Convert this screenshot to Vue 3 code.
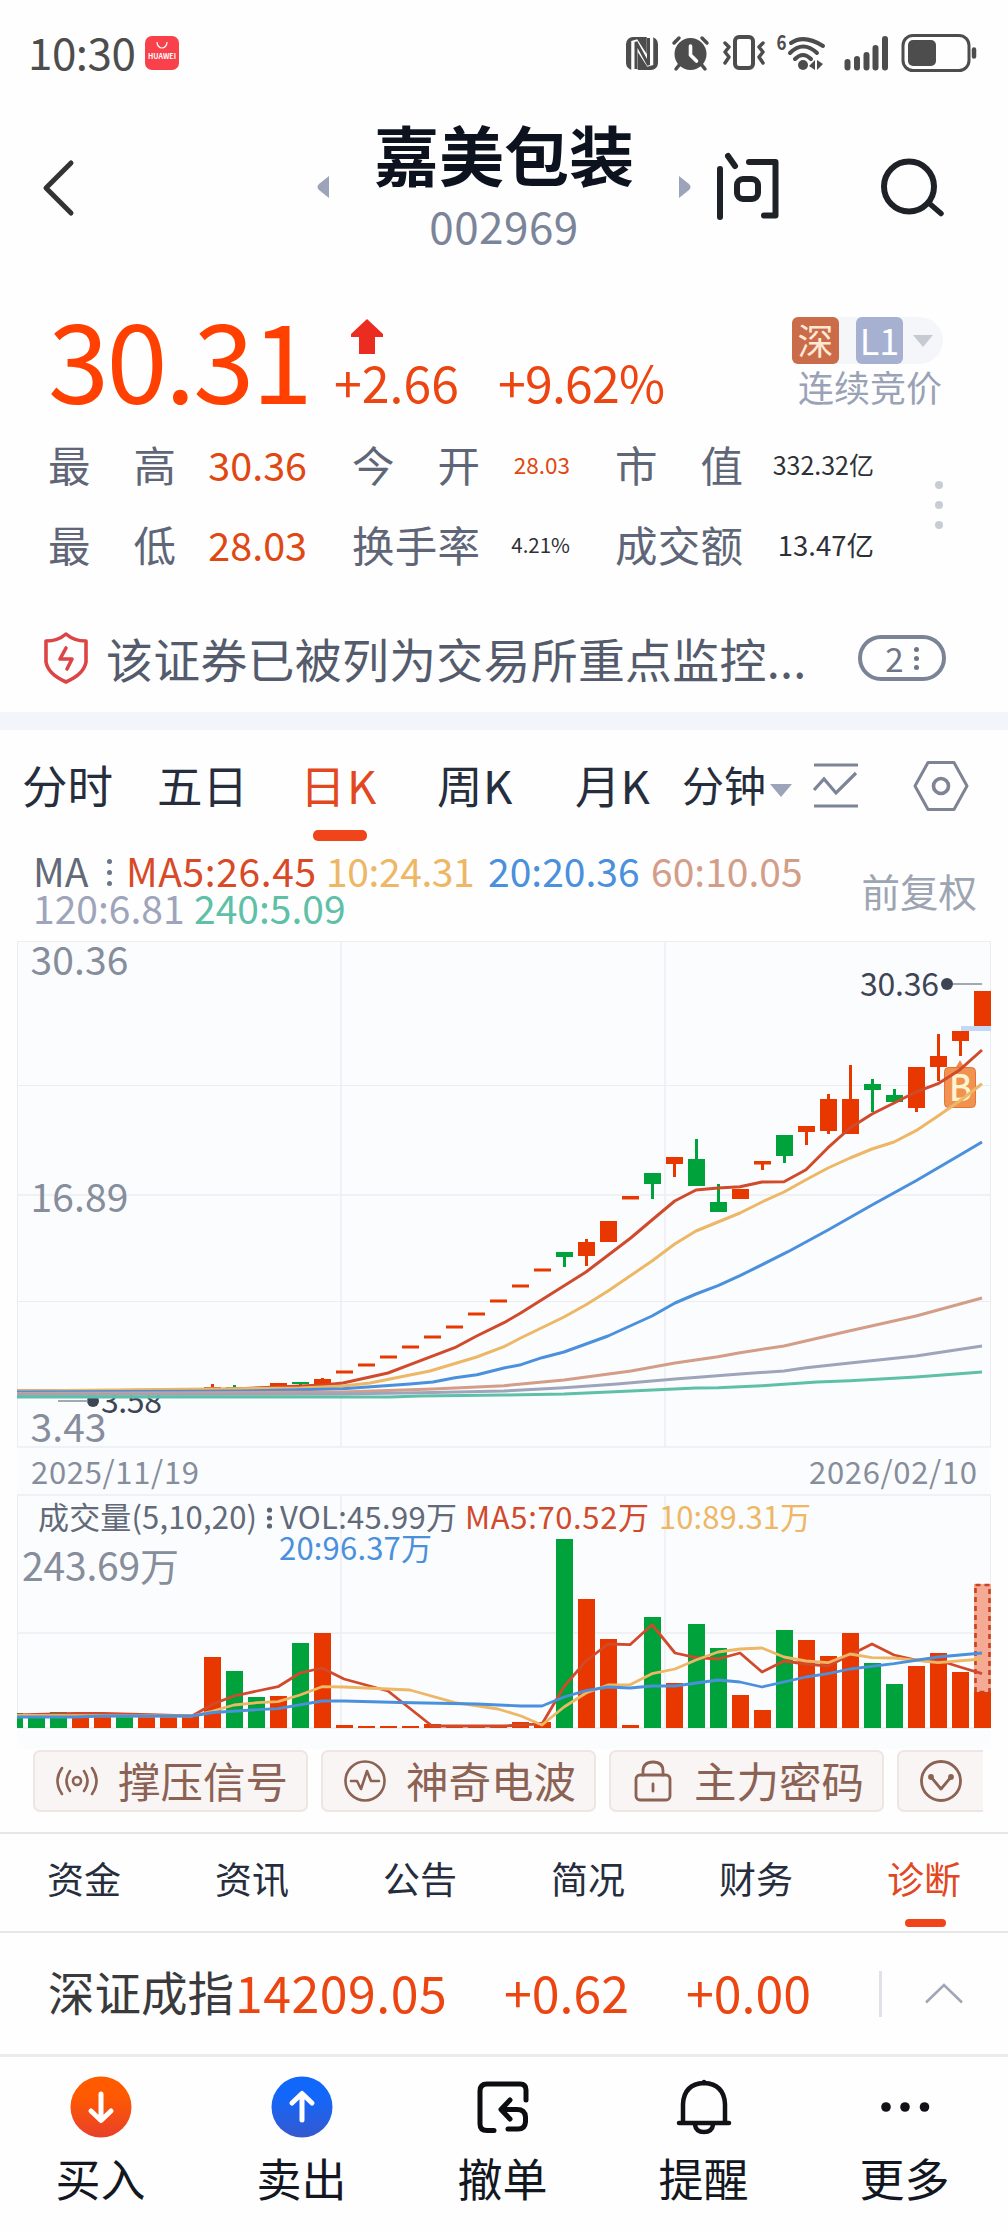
<!--
  Stock detail page: quote, daily K chart, volume, bottom actions
-->

<template>
  <div class="stock-page">
    <!-- Status bar -->
    <div class="status-bar">
      <span class="status-bar__time">10:30</span>
      <span class="status-bar__app">
        <svg width="14" height="9" viewBox="0 0 14 9"><path d="M2 1a5 6 0 0 0 10 0" fill="none" stroke="#fff" stroke-width="1.2" /></svg>
        <span class="status-bar__brand">HUAWEI</span>
      </span>
      <svg class="status-bar__icons" width="360" height="44" viewBox="620 31 360 44" fill="none" stroke="#4d4d4d" stroke-linecap="round">
        <rect x="626" y="37" width="32" height="33" rx="7" fill="#4d4d4d" stroke="none" />
        <path d="M634.500 70V41L650 65V36" stroke="#fff" stroke-width="6.500" stroke-linecap="butt" stroke-linejoin="bevel" />
        <path d="M636 69V42L648.500 65V38" stroke="#4d4d4d" stroke-width="3" stroke-linecap="butt" stroke-linejoin="bevel" />
        <circle cx="690.500" cy="54" r="16" fill="#4d4d4d" stroke="none" />
        <path d="M674 43l5-5M702 38l5 5M680 64l-4 5M701 64l4 5" stroke-width="3.500" />
        <path d="M690.500 46v9l6 6" stroke="#fff" stroke-width="3.600" />
        <rect x="735" y="37" width="18" height="31" rx="4" stroke-width="4" />
        <path d="M725 43l4 4-4 5 4 5-4 6M763 43l-4 4 4 5-4 5 4 6" stroke-width="3.500" stroke-linejoin="round" />
        <path d="M791 43q13-9 32 3M790 53q13-13 27 0M795 59q8-8 16 0" stroke-width="4" />
        <circle cx="803" cy="65" r="5" fill="#4d4d4d" stroke="none" />
        <path d="M809 66l6-6v10M817 60v10l6-6z" fill="#4d4d4d" stroke="none" />
        <text x="776.500" y="50" font-size="21" font-weight="700" fill="#4d4d4d" stroke="none" textLength="10" lengthAdjust="spacingAndGlyphs">6</text>
        <path d="M847.500 62v5.500M857 59v8.500M866.500 55v12.500M875.500 48v19.500M885 39v28.500" stroke-width="6" />
        <rect x="903" y="35.500" width="66" height="35" rx="10" stroke-width="3" />
        <rect x="908" y="40" width="28" height="26" rx="5" fill="#4d4d4d" stroke="none" />
        <path d="M974 49.500v7" stroke-width="4.500" />
      </svg>
    </div>

    <!-- Header -->
    <header class="nav">
      <svg class="nav__back" width="34" height="60" viewBox="0 0 34 60" fill="none" stroke="#333" stroke-width="5" stroke-linecap="round" stroke-linejoin="round">
        <path d="M30 5L5 30L30 55" />
      </svg>
      <svg class="nav__prev" width="12" height="22" viewBox="0 0 12 22"><path d="M12 0L2 8Q-1 11 2 14L12 22z" fill="#9ba4b8" /></svg>
      <div class="nav__title">
        <h1 class="nav__name">嘉美包装</h1>
        <span class="nav__code">002969</span>
      </div>
      <svg class="nav__next" width="12" height="22" viewBox="0 0 12 22"><path d="M0 0L10 8Q13 11 10 14L0 22z" fill="#9ba4b8" /></svg>
      <svg class="nav__ask" width="64" height="68" viewBox="716 153 64 68" fill="none" stroke="#1e2227" stroke-width="6" stroke-linecap="round" stroke-linejoin="round">
        <path d="M720 169V217M728 156L735 166M749 162H775.500V215.500H764" />
        <rect x="737" y="179" width="21" height="20" rx="6" />
      </svg>
      <svg class="nav__search" width="66" height="62" viewBox="880 157 66 62" fill="none" stroke="#1e2227" stroke-width="6" stroke-linecap="round">
        <circle cx="909" cy="186.500" r="25" />
        <path d="M930 204L941 213.500" stroke-width="5.500" />
      </svg>
    </header>

    <!-- Quote -->
    <section class="quote">
      <div class="quote__top">
        <span class="quote__price">30.31</span>
        <div class="quote__change">
          <svg class="quote__arrow" width="32" height="36" viewBox="0 0 32 36"><path d="M16 0L32 15V18H24V35H8V18H0V15z" fill="#eb2c20" /></svg>
          <div class="quote__diff">
            <span class="quote__delta">+2.66</span>
            <span class="quote__percent">+9.62%</span>
          </div>
        </div>
        <div class="quote__market">
          <div class="quote__badges">
            <span class="badge badge--sz">深</span>
            <span class="badge badge--level">L1</span>
            <svg width="20" height="12" viewBox="0 0 20 12"><path d="M0 0H20L10 12z" fill="#c6cad3" /></svg>
          </div>
          <span class="quote__phase">连续竞价</span>
        </div>
      </div>
      <div class="quote__body">
        <div class="quote__grid">
          <template v-for="item in stats" :key="item.label">
            <span class="quote__label"><i v-for="c in item.label" :key="c">{{ c }}</i></span>
            <span class="quote__value" :class="item.cls">{{ item.value }}</span>
          </template>
        </div>
        <div class="quote__more"><i></i><i></i><i></i></div>
      </div>
    </section>

    <!-- Notice -->
    <section class="notice">
      <svg width="46" height="54" viewBox="0 0 46 54" fill="none" stroke="#dc4545" stroke-width="3.600" stroke-linejoin="round" stroke-linecap="round">
        <path d="M23 3Q31 10 43 10V31Q41 43 23 51Q5 43 3 31V10Q15 10 23 3z" />
        <path d="M23 17L17 28H29L24 38" />
      </svg>
      <span class="notice__text">该证券已被列为交易所重点监控...</span>
      <span class="notice__count">2<span class="dots"><i></i><i></i><i></i></span></span>
    </section>

    <!-- Period tabs -->
    <nav class="period">
      <span v-for="tab in periods" :key="tab.name" class="period__item" :class="[tab.cls, { 'period__item--active': tab.active }]">{{ tab.name }}</span>
      <svg class="period__caret" width="22" height="13" viewBox="0 0 22 13"><path d="M0 0H22L11 13z" fill="#9ba4b8" /></svg>
      <svg class="period__line" width="46" height="46" viewBox="0 0 46 46" fill="none" stroke="#7c8496" stroke-width="3.200">
        <path d="M1 2H45M1 43H45M1 27L11 16L23 30L43 10" />
      </svg>
      <svg class="period__set" width="58" height="52" viewBox="0 0 58 52" fill="none" stroke="#7f8494" stroke-width="3">
        <path d="M16 2.500H42L55 26L42 49.500H16L3 26z" stroke-linejoin="round" />
        <circle cx="29" cy="26" r="7.500" stroke-width="3.600" />
      </svg>
    </nav>

    <!-- MA legend -->
    <section class="ma">
      <div class="ma__values">
        <div class="ma__row">
          <span class="ma__name">MA</span>
          <span class="dots dots--ma"><i></i><i></i><i></i></span>
          <span class="ma__item ma__item--5">MA5:26.45</span>
          <span class="ma__item ma__item--10">10:24.31</span>
          <span class="ma__item ma__item--20">20:20.36</span>
          <span class="ma__item ma__item--60">60:10.05</span>
        </div>
        <div class="ma__row">
          <span class="ma__item ma__item--120">120:6.81</span>
          <span class="ma__item ma__item--240">240:5.09</span>
        </div>
      </div>
      <span class="ma__adjust">前复权</span>
    </section>

    <!-- K line and volume -->
    <svg class="chart" width="1008" height="809" viewBox="0 940 1008 809">
      <rect x="17" y="941" width="974" height="808" fill="#fbfcfe" />
      <g fill="none" stroke="#ebedf1" stroke-width="1.500">
        <path d="M17.500 1447V941.500H990.500V1447M17.500 1495V1728M990.500 1495V1728M17 1085.500H991M17 1301.500H991" stroke-width="1" />
        <path d="M17 1195H991M17 1447H991M17 1495H991M17 1633H991M17 1728H991M341 941V1447M665 941V1447M341 1495V1728M665 1495V1728" />
      </g>

      <g fill="#868d9b" font-size="39">
        <text x="30.500" y="975" textLength="98">30.36</text>
        <text x="30.500" y="1212" textLength="98">16.89</text>
        <text x="30.500" y="1442" textLength="76">3.43</text>
        <text x="22" y="1581" textLength="157">243.69万</text>
      </g>
      <g fill="#868d9b" font-size="31">
        <text x="31" y="1484" textLength="168">2025/11/19</text>
        <text x="809" y="1484" textLength="168">2026/02/10</text>
      </g>

      <g fill="#3d4554" font-size="32">
        <text x="860" y="996" textLength="79">30.36</text>
        <circle cx="947" cy="984" r="6" />
        <path d="M953 984H982" stroke="#8f949e" stroke-width="1.600" />
        <text x="101" y="1413" textLength="61">3.58</text>
        <circle cx="93" cy="1401" r="6" />
        <path d="M58 1401H88" stroke="#8f949e" stroke-width="1.600" />
      </g>

      <rect x="961" y="1026" width="30" height="5" fill="#c4d8f5" />
      <g v-for="c in candles" :key="'k' + c[0]" :fill="color(c[1])">
        <rect :x="cx(c[0]) - 8.5" :y="c[2]" width="17" :height="c[3] - c[2]" />
        <rect v-if="c[4]" :x="cx(c[0]) - 1.5" :y="c[4]" width="3" :height="c[5] - c[4]" />
      </g>

      <path d="M956 1067L960 1060L964 1067z" fill="#f08a4b" />
      <rect x="944.500" y="1067.500" width="31" height="40" rx="4" fill="#f09350" stroke="#e8703a" />
      <text x="949" y="1101" font-size="37" font-weight="500" fill="#fff3d0" textLength="23" lengthAdjust="spacingAndGlyphs">B</text>

      <g fill="none" stroke-width="3" stroke-linejoin="round">
        <polyline v-for="l in priceLines" :key="l.color" :points="l.points" :stroke="l.color" />
      </g>

      <rect v-for="v in volumes" :key="'v' + v[0]" :x="Math.max(cx(v[0]) - 8.5, 17)" :y="v[2]" :width="v[0] ? 17 : 6" :height="1728 - v[2]" :fill="color(v[1])" />
      <rect x="974" y="1584" width="17" height="108" fill="#f5aa95" />
      <rect x="975.500" y="1585" width="14" height="107" fill="none" stroke="#c9431c" stroke-width="2.600" stroke-dasharray="5 4" />
      <g fill="none" stroke-width="2.800" stroke-linejoin="round">
        <polyline v-for="l in volumeLines" :key="l.color" :points="l.points" :stroke="l.color" />
      </g>

      <g font-size="31">
        <text x="38" y="1529" fill="#626978" textLength="219">成交量(5,10,20)</text>
        <g fill="#5d6474"><circle cx="269.500" cy="1510" r="2.600" /><circle cx="269.500" cy="1518" r="2.600" /><circle cx="269.500" cy="1526" r="2.600" /></g>
        <text x="280" y="1529" fill="#626978" textLength="177">VOL:45.99万</text>
        <text x="465" y="1529" fill="#d04a2b" textLength="184">MA5:70.52万</text>
        <text x="659" y="1529" fill="#edb766" textLength="152">10:89.31万</text>
        <text x="279" y="1560" fill="#4a90dc" textLength="153">20:96.37万</text>
      </g>
    </svg>

    <!-- Signal buttons -->
    <section class="signals">
      <div class="signal">
        <svg width="44" height="40" viewBox="0 0 44 40" fill="none" stroke="#8b6253" stroke-width="2.600" stroke-linecap="round">
          <circle cx="22" cy="20" r="4" />
          <path d="M15 10Q8 20 15 30M29 10Q36 20 29 30M7 7Q-2 20 7 33M37 7Q46 20 37 33" />
        </svg>
        <span>撑压信号</span>
      </div>
      <div class="signal">
        <svg width="44" height="44" viewBox="0 0 44 44" fill="none" stroke="#8b6253" stroke-width="2.600" stroke-linecap="round" stroke-linejoin="round">
          <circle cx="22" cy="22" r="19.500" />
          <path d="M8 22H14L18 30L24 12L28 22H36" />
        </svg>
        <span>神奇电波</span>
      </div>
      <div class="signal">
        <svg width="44" height="44" viewBox="0 0 44 44" fill="none" stroke="#8b6253" stroke-width="2.800" stroke-linecap="round">
          <rect x="5" y="16" width="34" height="25" rx="4" />
          <path d="M12 16V12Q12 3 22 3Q32 3 32 12V16M22 25V32" />
        </svg>
        <span>主力密码</span>
      </div>
      <div class="signal signal--cut">
        <svg width="44" height="44" viewBox="0 0 44 44" fill="none" stroke="#8b6253" stroke-width="2.800" stroke-linecap="round" stroke-linejoin="round">
          <circle cx="22" cy="22" r="19.500" />
          <path d="M12 18L22 30L32 18" />
          <circle cx="12" cy="18" r="1.500" fill="#8b6253" /><circle cx="32" cy="18" r="1.500" fill="#8b6253" />
        </svg>
      </div>
    </section>

    <!-- Info tabs -->
    <nav class="info">
      <span v-for="name in infoTabs" :key="name" class="info__item" :class="{ 'info__item--active': name === '诊断' }">{{ name }}</span>
    </nav>

    <!-- Index -->
    <section class="index">
      <span class="index__name">深证成指</span>
      <span class="index__num index__num--point">14209.05</span>
      <span class="index__num index__num--diff">+0.62</span>
      <span class="index__num">+0.00</span>
      <span class="index__split"></span>
      <svg width="38" height="21" viewBox="0 0 38 21" fill="none" stroke="#a0a6b4" stroke-width="2.600"><path d="M1 19.500L19 2L37 19.500" /></svg>
    </section>

    <!-- Bottom actions -->
    <footer class="actions">
      <div class="action">
        <svg width="62" height="62" viewBox="0 0 62 62">
          <defs><linearGradient id="buy" x1="0" y1="0" x2="0" y2="1"><stop offset="0.3" stop-color="#ff5a00" /><stop offset="1" stop-color="#e8402a" /></linearGradient></defs>
          <circle cx="31" cy="31" r="30.500" fill="url(#buy)" />
          <path d="M31 18V44M21 35L31 44.500L41 35" fill="none" stroke="#fff" stroke-width="5" stroke-linecap="round" stroke-linejoin="round" />
        </svg>
        <span>买入</span>
      </div>
      <div class="action">
        <svg width="62" height="62" viewBox="0 0 62 62">
          <defs><linearGradient id="sell" x1="0" y1="0" x2="0" y2="1"><stop offset="0.3" stop-color="#1267fb" /><stop offset="1" stop-color="#3559cf" /></linearGradient></defs>
          <circle cx="31" cy="31" r="30.500" fill="url(#sell)" />
          <path d="M31 44V18M21 27L31 17.500L41 27" fill="none" stroke="#fff" stroke-width="5" stroke-linecap="round" stroke-linejoin="round" />
        </svg>
        <span>卖出</span>
      </div>
      <div class="action">
        <svg width="62" height="62" viewBox="0 0 62 62" fill="none" stroke="#0c0d10" stroke-width="5" stroke-linecap="round" stroke-linejoin="round">
          <path d="M54 24V14Q54 8 48 8H15Q8 8 8 15V48Q8 54.500 15 54.500H22" />
          <path d="M38 24L29 33.500L38 43M30 33.500H45Q53 33.500 53.500 41V46Q53 53 46 53H36" />
        </svg>
        <span>撤单</span>
      </div>
      <div class="action">
        <svg width="62" height="62" viewBox="0 0 62 62" fill="none" stroke="#101218" stroke-width="4.500" stroke-linecap="round" stroke-linejoin="round">
          <path d="M6 47H56M10 47V28Q11 8 31 7Q51 8 52 28V47M31 6V7M22 49Q23 56 31 56Q39 56 40 49" />
        </svg>
        <span>提醒</span>
      </div>
      <div class="action">
        <svg width="62" height="62" viewBox="0 0 62 62" fill="#101218"><circle cx="12" cy="31" r="4.800" /><circle cx="31" cy="31" r="4.800" /><circle cx="50.500" cy="31" r="4.800" /></svg>
        <span>更多</span>
      </div>
    </footer>
  </div>
</template>

<script setup>
const stats = [
  { label: '最高', value: '30.36', cls: 'quote__value--up' },
  { label: '今开', value: '28.03', cls: 'quote__value--up quote__value--s' },
  { label: '市值', value: '332.32亿', cls: 'quote__value--m' },
  { label: '最低', value: '28.03', cls: 'quote__value--up' },
  { label: '换手率', value: '4.21%', cls: 'quote__value--xs' },
  { label: '成交额', value: '13.47亿', cls: 'quote__value--l' }
]

const periods = [
  { name: '分时', cls: 'period__item--first' },
  { name: '五日', cls: 'period__item--five' },
  { name: '日K', cls: 'period__item--day', active: true },
  { name: '周K', cls: 'period__item--week' },
  { name: '月K', cls: 'period__item--month' },
  { name: '分钟', cls: 'period__item--minute' }
]

const infoTabs = ['资金', '资讯', '公告', '简况', '财务', '诊断']

// x of the n-th trading day
const cx = (n) => 14.5 + 22 * n
const color = (type) => (type === 'r' ? '#e83800' : '#00a33b')

// [day, type, top, bottom, high, low]
const candles = [
  [8, 'r', 1388, 1390], [9, 'r', 1387, 1390, 1384, 1390], [10, 'g', 1387, 1388.5, 1385, 1388],
  [11, 'g', 1388, 1389, 1387, 1389], [12, 'r', 1383, 1388], [13, 'g', 1382, 1384, 1382, 1385.5],
  [14, 'r', 1379, 1384.5, 1378, 1384],
  ...[1372, 1365, 1357, 1347, 1337, 1327, 1314, 1301, 1286, 1270].map((y, i) => [15 + i, 'r', y - 1.5, y + 1.5]),
  [25, 'g', 1252, 1257, 1252, 1267], [26, 'r', 1242, 1256, 1239, 1266], [27, 'r', 1221, 1242],
  [28, 'r', 1196, 1199.5], [29, 'g', 1173, 1184, 1173, 1199], [30, 'r', 1157, 1164, 1157, 1177],
  [31, 'g', 1159, 1186, 1139, 1186], [32, 'g', 1202, 1212, 1184, 1212], [33, 'r', 1189, 1199],
  [34, 'r', 1161, 1164.5, 1161, 1170], [35, 'g', 1135, 1156, 1135, 1163], [36, 'r', 1126, 1132, 1126, 1145],
  [37, 'r', 1099, 1131, 1094, 1134], [38, 'r', 1099, 1134, 1065, 1134], [39, 'g', 1084, 1090, 1079, 1112],
  [40, 'g', 1095, 1102, 1089, 1102], [41, 'r', 1067, 1108, 1067, 1112], [42, 'r', 1056, 1067, 1034, 1081],
  [43, 'r', 1031, 1041, 1031, 1056], [44, 'r', 991, 1026]
]

const priceLines = [
  { color: '#d04a2b', points: '17,1391 212,1390 278,1387 323,1385 343,1383 388,1373 410,1364.7 454.7,1347.7 476.7,1336 504,1322.7 520.7,1313 586,1272 630.7,1238 652,1220 674.7,1201 696,1190 718,1188 740,1186.7 762,1182 784,1181.7 806,1169.7 828,1147.7 850,1128 872,1114 894,1103 916,1092 938,1083.7 960,1069.7 982,1050' },
  { color: '#edb766', points: '17,1391 300,1388 343,1386 370,1383 430,1371 476.7,1357 504,1346.7 520.7,1338 564,1317 586,1304.7 608,1291 652,1261 674.7,1244 696,1231 740,1213 762,1202 784,1192 806,1179.7 828,1168 850,1158 872,1149 894,1142 916,1130.7 938,1116 960,1100.7 982,1083.7' },
  { color: '#4a90dc', points: '17,1392 240,1391 343,1388.7 410,1384 433,1382 455,1377.7 477,1374.7 504,1368 521,1364.7 542,1357.7 564,1352 586,1344 608,1336 652,1316 675,1303 696,1294 718,1285.7 740,1275.7 788,1251.7 828,1230 872,1205 916,1180.7 960,1155 982,1142' },
  { color: '#d39d88', points: '17,1393.5 343,1392 433,1389 504,1385.7 564,1380 631,1371 675,1363 718,1356.7 740,1352.7 784,1346 850,1330.7 916,1316 982,1298' },
  { color: '#9ea5ba', points: '17,1394.5 343,1394 433,1392.5 504,1391 564,1387.7 617,1384 675,1379 740,1374 784,1371 806,1367.7 850,1363 916,1356 982,1346' },
  { color: '#5fc0a8', points: '17,1397 390,1397 420,1396 504,1395 564,1394 631,1391 696,1388 718,1387.7 762,1385.7 817,1382 850,1380.7 916,1377 982,1372' }
]

// [day, type, top]
const volumes = [
  [0, 'g', 1713], [1, 'g', 1717], [2, 'g', 1712], [3, 'r', 1716], [4, 'r', 1716], [5, 'g', 1717],
  [6, 'r', 1716], [7, 'r', 1716], [8, 'r', 1716], [9, 'r', 1657], [10, 'g', 1671], [11, 'g', 1697],
  [12, 'r', 1696], [13, 'g', 1643], [14, 'r', 1633], [15, 'r', 1725], [16, 'r', 1726], [17, 'r', 1726],
  [18, 'r', 1726], [19, 'r', 1724], [20, 'r', 1726], [21, 'r', 1726], [22, 'r', 1725], [23, 'r', 1722],
  [24, 'r', 1722], [25, 'g', 1539], [26, 'r', 1599], [27, 'r', 1639], [28, 'r', 1725], [29, 'g', 1617],
  [30, 'r', 1683], [31, 'g', 1624], [32, 'g', 1648], [33, 'r', 1695], [34, 'r', 1710], [35, 'g', 1630],
  [36, 'r', 1640], [37, 'r', 1656], [38, 'r', 1633], [39, 'g', 1663], [40, 'g', 1684], [41, 'r', 1666],
  [42, 'r', 1653], [43, 'r', 1672], [44, 'r', 1692]
]

const volumeLines = [
  { color: '#d04a2b', points: '17,1715 75,1713.5 103,1713.5 150,1714.7 192,1716 213,1704 234,1696 257,1691 278,1686.7 300,1673 322,1668 344,1679 388,1691 432,1726 504,1726 524,1724.7 542,1724 564,1686.7 586,1661 608,1644 630,1644.7 652,1624.7 675,1653 696,1657.7 718,1659 740,1653 762,1672 784,1661 806,1664 828,1666 850,1655 872,1644 894,1655 916,1660 944,1662 960,1667 982,1673.7' },
  { color: '#edb766', points: '17,1715.5 192,1716 213,1711 234,1705 257,1702.7 278,1701.7 300,1695 322,1686.7 344,1687 410,1690 455,1702.7 498,1709 521,1716 542,1725 564,1707 586,1693 608,1685 630,1684.7 652,1673.7 675,1669 696,1660 718,1652 740,1649 762,1648 784,1657 806,1661 828,1662.7 850,1654 872,1657.7 894,1658 938,1662.7 982,1659' },
  { color: '#4a90dc', points: '17,1717 75,1717 103,1716 192,1716 213,1712.5 257,1709.7 278,1708.7 322,1701 344,1701 400,1702.5 477,1704 521,1706 542,1706 564,1697 586,1690.7 608,1687 630,1688 652,1686 675,1686 718,1680 740,1682 762,1687 806,1677 828,1673.7 850,1669 894,1663.7 938,1657 982,1653' }
]
</script>

<style>
body {
  background: #fefefe;
}
</style>

<style scoped>
.stock-page {
  width: 1008px;
  height: 2232px;
  overflow: hidden;
  background: #fefefe;
  font-family: 'Noto Sans CJK SC', 'Noto Sans', sans-serif;
  font-weight: 400;
  color: #262d3d;
  white-space: nowrap;
}

.stock-page svg {
  display: block;
  flex: none;
  overflow: visible;
}

i {
  font-style: normal;
}

/* Status bar */
.status-bar {
  display: flex;
  align-items: center;
  height: 106px;
  box-sizing: border-box;
  padding: 0 28px;
}

.status-bar__time {
  width: 117px;
  padding-bottom: 4px;
  font-size: 44px;
  line-height: 50px;
  letter-spacing: -0.5px;
  color: #4d4d4d;
}

.status-bar__app {
  display: flex;
  flex-direction: column;
  align-items: center;
  width: 34px;
  height: 34px;
  padding-top: 5px;
  box-sizing: border-box;
  border-radius: 7px;
  background: #f8414b;
}

.status-bar__brand {
  margin-top: 2px;
  font-size: 7px;
  line-height: 8px;
  font-weight: 700;
  color: #fff;
}

.status-bar__icons {
  margin-left: auto;
}

/* Header */
.nav {
  display: flex;
  height: 194px;
}

.nav__back {
  margin: 52px 0 0 41px;
}

.nav__prev {
  margin: 70px 0 0 242px;
}

.nav__title {
  display: flex;
  flex-direction: column;
  align-items: center;
  width: 350px;
}

.nav__name {
  margin: 10px 0 0;
  font-size: 65px;
  line-height: 74px;
  font-weight: 700;
  color: #0d121f;
}

.nav__code {
  margin-top: 10px;
  font-size: 44px;
  line-height: 50px;
  letter-spacing: 0.5px;
  color: #7b8498;
}

.nav__next {
  margin-top: 70px;
}

.nav__ask {
  margin: 47px 0 0 25px;
}

.nav__search {
  margin: 51px 0 0 100px;
}

/* Quote */
.quote {
  height: 300px;
}

.quote__top {
  display: flex;
  height: 124px;
}

.quote__price {
  width: 286px;
  padding-left: 48px;
  font-size: 110px;
  line-height: 112px;
  letter-spacing: -2.5px;
  color: #ff4000;
}

.quote__change {
  width: 458px;
  padding-top: 19px;
}

.quote__arrow {
  margin-left: 17px;
}

.quote__diff {
  display: flex;
  font-size: 50px;
  line-height: 52px;
  color: #ec4511;
}

.quote__delta {
  width: 164px;
}

.quote__percent {
  letter-spacing: -0.8px;
}

.quote__market {
  padding-top: 17px;
}

.quote__badges {
  display: flex;
  align-items: center;
  width: 151px;
  height: 47px;
  border-radius: 6px 24px 24px 6px;
  background: #f5f6f9;
}

.badge {
  width: 47px;
  height: 47px;
  margin-right: 17px;
  border-radius: 6px;
  font-size: 36px;
  line-height: 44px;
  text-align: center;
  color: #fff;
}

.badge--sz {
  background: #ca6c4a;
  color: #ffe9d6;
}

.badge--level {
  margin-right: 10px;
  background: #a6b0d0;
}

.quote__phase {
  display: block;
  margin: 4px 0 0 6px;
  font-size: 36px;
  line-height: 36px;
  color: #9aa2b5;
}

.quote__body {
  display: flex;
}

.quote__grid {
  display: grid;
  grid-template-columns: 128px 176px 128px 135px 128px 131px;
  grid-auto-rows: 80px;
  align-items: center;
  width: 891px;
  padding-left: 48px;
  box-sizing: border-box;
}

.quote__label {
  display: flex;
  justify-content: space-between;
  font-size: 42.500px;
  line-height: 56px;
  color: #5f6677;
}

.quote__value {
  width: 131px;
  text-align: right;
  font-size: 39.500px;
  line-height: 48px;
  color: #2e3036;
}

.quote__value--up {
  color: #e04813;
}

.quote__value--s {
  width: 90px;
  font-size: 22.500px;
}

.quote__value--xs {
  width: 90px;
  font-size: 20.500px;
}

.quote__value--m {
  font-size: 25px;
}

.quote__value--l {
  font-size: 27.500px;
}

.quote__more {
  display: flex;
  flex-direction: column;
  gap: 12px;
  margin: 57px 0 0 44px;
}

.quote__more i {
  width: 8px;
  height: 8px;
  border-radius: 50%;
  background: #c8cdd5;
}

/* Notice */
.notice {
  display: flex;
  align-items: center;
  height: 130px;
  box-sizing: border-box;
  padding: 14px 0 10px 43px;
  border-bottom: 18px solid #f4f5fa;
}

.notice__text {
  width: 752px;
  margin-left: 17px;
  font-size: 46.900px;
  line-height: 60px;
  letter-spacing: 0.3px;
  color: #545b6c;
}

.notice__count {
  display: flex;
  align-items: center;
  justify-content: center;
  gap: 10px;
  width: 88px;
  height: 46px;
  box-sizing: border-box;
  border: 4px solid #7b8396;
  border-radius: 23px;
  font-size: 33px;
  line-height: 36px;
  color: #6d7588;
}

.dots {
  display: flex;
  flex-direction: column;
  gap: 4px;
}

.dots i {
  width: 5px;
  height: 5px;
  border-radius: 50%;
  background: #6d7588;
}

/* Period tabs */
.period {
  display: flex;
  align-items: center;
  height: 112px;
}

.period__item {
  position: relative;
  padding-bottom: 4px;
  font-size: 45.500px;
  line-height: 60px;
}

.period__item--first {
  width: 135px;
  padding-left: 22px;
}

.period__item--five {
  width: 143px;
}

.period__item--day {
  width: 80px;
  margin-right: 57px;
  letter-spacing: 1.500px;
}

.period__item--week {
  width: 138px;
  letter-spacing: 0.5px;
}

.period__item--month {
  width: 107px;
}

.period__item--minute {
  width: 88px;
  font-size: 42px;
}

.period__item--active {
  color: #e2481f;
}

.period__item--active::after {
  content: '';
  position: absolute;
  left: 13px;
  bottom: -23px;
  width: 54px;
  height: 11px;
  border-radius: 5px;
  background: #f0441a;
}

.period__caret {
  margin-top: 8px;
}

.period__line {
  margin-left: 21px;
}

.period__set {
  margin-left: 53px;
}

/* MA legend */
.ma {
  display: flex;
  justify-content: space-between;
  height: 98px;
  padding: 0 31px 0 33px;
}

.ma__values {
  padding-top: 10px;
}

.ma__row {
  display: flex;
  align-items: center;
  height: 37px;
  font-size: 39px;
  line-height: 37px;
}

.ma__name {
  width: 74px;
  color: #626978;
}

.dots--ma {
  width: 19px;
  gap: 6px;
  padding-top: 4px;
}

.ma__item--5 {
  width: 200px;
  letter-spacing: 0.6px;
  color: #d84a27;
}

.ma__item--10 {
  width: 162px;
  letter-spacing: -0.4px;
  color: #edb766;
}

.ma__item--20 {
  width: 163px;
  color: #4a90dc;
}

.ma__item--60 {
  color: #d39d88;
}

.ma__item--120 {
  width: 161px;
  color: #9ea5ba;
}

.ma__item--240 {
  color: #5fc0a8;
}

.ma__adjust {
  margin-top: 25px;
  font-size: 38.500px;
  line-height: 46px;
  color: #9da4b2;
}

/* Signal buttons */
.signals {
  display: flex;
  gap: 13px;
  width: 983px;
  height: 83px;
  padding: 1px 0 0 33px;
  box-sizing: border-box;
  overflow: hidden;
}

.signal {
  display: flex;
  align-items: center;
  flex: none;
  width: 275px;
  height: 62px;
  padding-left: 20px;
  box-sizing: border-box;
  border: 2px solid #eee6e4;
  border-radius: 7px;
  background: #f8f5f4;
  font-size: 42.500px;
  line-height: 56px;
  color: #8b6253;
}

.signal span {
  margin-left: 19px;
  padding-bottom: 2px;
}

.signal--cut {
  width: 120px;
}

/* Info tabs */
.info {
  display: flex;
  align-items: center;
  height: 101px;
  box-sizing: border-box;
  padding-bottom: 10px;
  border-top: 2px solid #e6e7e9;
  border-bottom: 2px solid #e6e7e9;
}

.info__item {
  position: relative;
  width: 168px;
  font-size: 37px;
  line-height: 48px;
  text-align: center;
}

.info__item--active {
  color: #e2481f;
}

.info__item--active::after {
  content: '';
  position: absolute;
  left: 65px;
  bottom: -25px;
  width: 41px;
  height: 8px;
  border-radius: 4px;
  background: #f0441a;
}

/* Index */
.index {
  display: flex;
  align-items: center;
  height: 124px;
  box-sizing: border-box;
  padding-left: 48px;
  border-bottom: 3px solid #ebecee;
}

.index__name {
  width: 187px;
  padding-bottom: 5px;
  font-size: 46.500px;
  line-height: 60px;
  color: #3a3a3c;
}

.index__num {
  width: 193px;
  padding-bottom: 5px;
  font-size: 50px;
  line-height: 60px;
  color: #ec4511;
}

.index__num--point {
  width: 269px;
  letter-spacing: 0.5px;
}

.index__num--diff {
  width: 182px;
}

.index__split {
  width: 3px;
  height: 46px;
  margin-right: 43px;
  background: #dfe2e8;
}

/* Bottom actions */
.actions {
  display: flex;
  padding-top: 19px;
}

.action {
  display: flex;
  flex-direction: column;
  align-items: center;
  width: 201px;
}

.action span {
  margin-top: 10px;
  font-size: 45px;
  line-height: 60px;
  color: #121722;
}
</style>
